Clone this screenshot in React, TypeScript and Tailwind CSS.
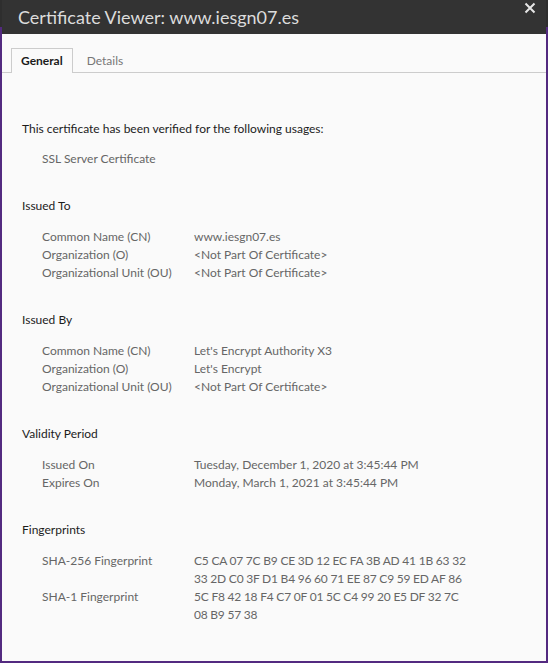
const Row = ({ label, values, tight }: { label: string; values: string[]; tight?: boolean }) => (
  <div className="flex">
    <div className="w-[152px] shrink-0">{label}</div>
    <div className={tight ? "tracking-[-0.22px]" : ""}>
      {values.map((v) => (
        <div key={v}>{v}</div>
      ))}
    </div>
  </div>
);

const Section = ({
  title,
  rows,
  tight,
}: {
  title: string;
  rows: { label: string; values: string[] }[];
  tight?: boolean;
}) => (
  <div className="mt-[29px]">
    <div className="text-[#1c1c1c]">{title}</div>
    <div className="mt-[13px] pl-5 text-[#666]">
      {rows.map((r) => (
        <Row key={r.label} label={r.label} values={r.values} tight={tight} />
      ))}
    </div>
  </div>
);

const App = () => {
  return (
    <div
      className="h-[663px] w-[548px] px-[2px] pb-[2px] bg-[linear-gradient(to_bottom,#2e2e2e_27px,#532a80_27px)] overflow-hidden"
      style={{ fontFamily: "Lato, 'Noto Sans', sans-serif" }}
    >
      <div className="flex h-full w-[544px] flex-col bg-[#fafafa]">
        <div className="flex h-[34px] items-start justify-between bg-[#333333] pl-4 pr-[10px]">
          <div className="pt-[6px] text-[18px] leading-[22px] text-[#dcdcdc]">
            Certificate Viewer: www.iesgn07.es
          </div>
          <svg width="12" height="12" viewBox="0 0 12 12" className="mt-[2px]">
            <path d="M1.5 1.5L10.5 10.5M10.5 1.5L1.5 10.5" stroke="#e6e6e6" strokeWidth="2" />
          </svg>
        </div>
        <div className="mt-[14px] flex border-b border-[#cccccc] pl-[9px] text-[12px]">
          <div className="-mb-px h-[25px] border border-b-0 border-[#cccccc] bg-[#fafafa] px-[9px] pt-[3px] font-bold text-[#1a1a1a]">
            General
          </div>
          <div className="px-[14px] pt-[4px] text-[#777]">Details</div>
        </div>
        <div className="pl-5 text-[12px] leading-[18px]">
          <div className="mt-[47px] text-[#1c1c1c]">
            This certificate has been verified for the following usages:
          </div>
          <div className="mt-[12px] pl-5 text-[#666]">SSL Server Certificate</div>
          <Section
            title="Issued To"
            rows={[
              { label: "Common Name (CN)", values: ["www.iesgn07.es"] },
              { label: "Organization (O)", values: ["<Not Part Of Certificate>"] },
              { label: "Organizational Unit (OU)", values: ["<Not Part Of Certificate>"] },
            ]}
          />
          <Section
            title="Issued By"
            rows={[
              { label: "Common Name (CN)", values: ["Let's Encrypt Authority X3"] },
              { label: "Organization (O)", values: ["Let's Encrypt"] },
              { label: "Organizational Unit (OU)", values: ["<Not Part Of Certificate>"] },
            ]}
          />
          <Section
            title="Validity Period"
            rows={[
              { label: "Issued On", values: ["Tuesday, December 1, 2020 at 3:45:44 PM"] },
              { label: "Expires On", values: ["Monday, March 1, 2021 at 3:45:44 PM"] },
            ]}
          />
          <Section
            title="Fingerprints"
            tight
            rows={[
              {
                label: "SHA-256 Fingerprint",
                values: [
                  "C5 CA 07 7C B9 CE 3D 12 EC FA 3B AD 41 1B 63 32",
                  "33 2D C0 3F D1 B4 96 60 71 EE 87 C9 59 ED AF 86",
                ],
              },
              {
                label: "SHA-1 Fingerprint",
                values: ["5C F8 42 18 F4 C7 0F 01 5C C4 99 20 E5 DF 32 7C", "08 B9 57 38"],
              },
            ]}
          />
        </div>
      </div>
    </div>
  );
};

export default App;
